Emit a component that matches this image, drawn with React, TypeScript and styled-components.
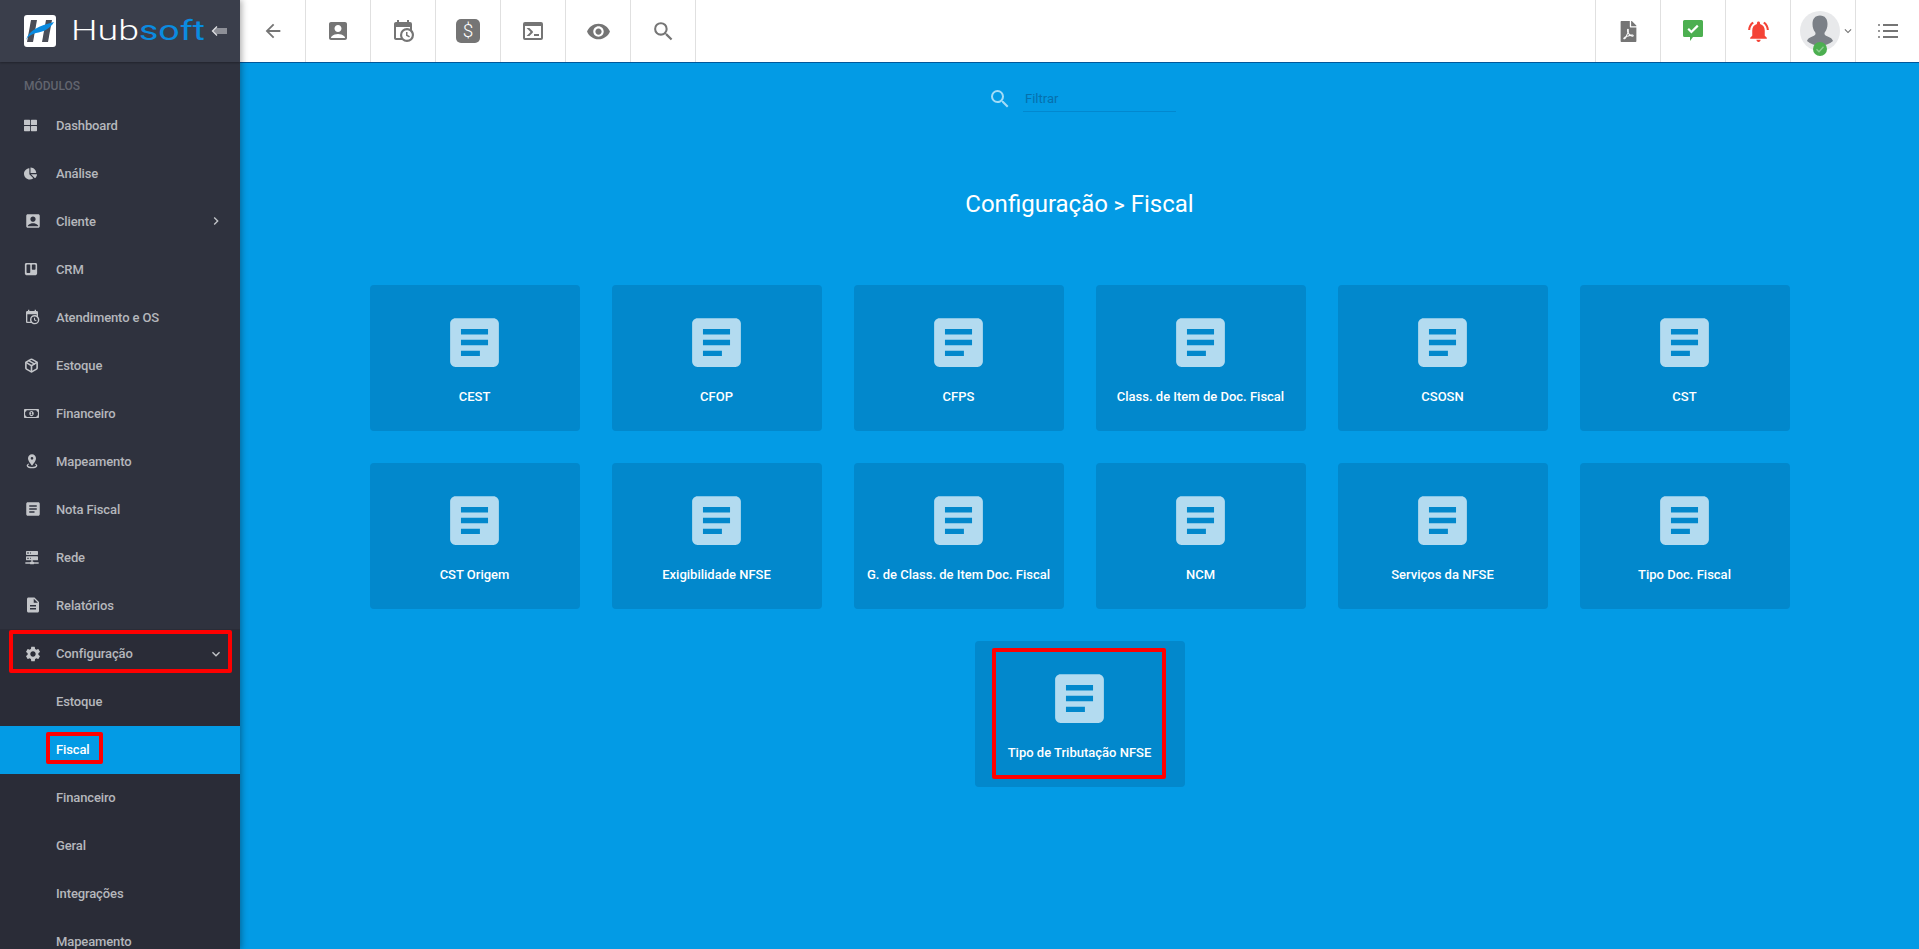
import React from 'react'
import styled, { createGlobalStyle } from 'styled-components'
import {
  MdAccountBox,
  MdArrowBack,
  MdArticle,
  MdChevronRight,
  MdDescription,
  MdExpandMore,
  MdNotificationsActive,
  MdSearch,
  MdSettings,
  MdVisibility,
} from 'react-icons/md'
import { FaChartPie, FaFilePdf, FaTrello, FaThLarge, FaRegMoneyBillAlt } from 'react-icons/fa'
import { LuPackage } from 'react-icons/lu'

const GlobalStyle = createGlobalStyle`
  html, body, #root {
    margin: 0;
    height: 100%;
    overflow: hidden;
  }
  body {
    font-family: Roboto, "Liberation Sans", sans-serif;
    background: #039be5;
  }
`

const CalendarClock = ({ size = 24 }: { size?: number }) => (
  <svg width={size} height={size} viewBox="0 0 24 24" fill="currentColor">
    <path d="M15,13H16.5V15.82L18.94,17.23L18.19,18.53L15,16.69V13M19,8H5V19H9.67C9.24,18.09 9,17.07 9,16A7,7 0 0,1 16,9C17.07,9 18.09,9.24 19,9.67V8M5,21C3.89,21 3,20.1 3,19V5C3,3.89 3.89,3 5,3H6V1H8V3H16V1H18V3H19A2,2 0 0,1 21,5V11.1C22.24,12.36 23,14.09 23,16A7,7 0 0,1 16,23C14.09,23 12.36,22.24 11.1,21H5M16,11.15A4.85,4.85 0 0,0 11.15,16C11.15,18.68 13.32,20.85 16,20.85A4.85,4.85 0 0,0 20.85,16C20.85,13.32 18.68,11.15 16,11.15Z" />
  </svg>
)

const MapMarker = ({ size = 24 }: { size?: number }) => (
  <svg width={size} height={size} viewBox="0 0 24 24" fill="currentColor">
    <path d="M12,2C15.31,2 18,4.66 18,7.95C18,12.41 12,19 12,19C12,19 6,12.41 6,7.95C6,4.66 8.69,2 12,2M12,6A2,2 0 0,0 10,8A2,2 0 0,0 12,10A2,2 0 0,0 14,8A2,2 0 0,0 12,6M20,19C20,21.21 16.42,23 12,23C7.58,23 4,21.21 4,19C4,17.71 5.22,16.56 7.11,15.83L7.75,16.74C6.67,17.19 6,17.81 6,18.5C6,19.88 8.69,21 12,21C15.31,21 18,19.88 18,18.5C18,17.81 17.33,17.19 16.25,16.74L16.89,15.83C18.78,16.56 20,17.71 20,19Z" />
  </svg>
)

const ServerNetwork = ({ size = 24 }: { size?: number }) => (
  <svg width={size} height={size} viewBox="0 0 24 24" fill="currentColor">
    <path d="M13,19H14A1,1 0 0,1 15,20H22V22H15A1,1 0 0,1 14,23H10A1,1 0 0,1 9,22H2V20H9A1,1 0 0,1 10,19H11V17H4A1,1 0 0,1 3,16V12A1,1 0 0,1 4,11H20A1,1 0 0,1 21,12V16A1,1 0 0,1 20,17H13V19M4,3H20A1,1 0 0,1 21,4V8A1,1 0 0,1 20,9H4A1,1 0 0,1 3,8V4A1,1 0 0,1 4,3M9,7H10V5H9V7M9,15H10V13H9V15M5,5V7H7V5H5M5,13V15H7V13H5Z" />
  </svg>
)

const ConsoleBox = ({ size = 24 }: { size?: number }) => (
  <svg width={size} height={size} viewBox="0 0 24 24" fill="currentColor">
    <path d="M20,19V7H4V19H20M20,3A2,2 0 0,1 22,5V19A2,2 0 0,1 20,21H4A2,2 0 0,1 2,19V5A2,2 0 0,1 4,3H20M13,17V15H18V17H13M9.58,13L5.57,9H8.4L11.7,12.3C12.09,12.69 12.09,13.33 11.7,13.72L8.42,17H5.59L9.58,13Z" />
  </svg>
)

const ChatCheck = () => (
  <svg width="20" height="22" viewBox="0 0 20 22">
    <path d="M1.5 0h17A1.5 1.5 0 0 1 20 1.5v14a1.5 1.5 0 0 1-1.5 1.500H10l-3 4v-4H1.500A1.500 1.500 0 0 1 0 15.500v-14A1.500 1.500 0 0 1 1.500 0z" fill="#4caf50" />
    <path d="M5.200 8.800l3.200 3.200 6.400-6.400" fill="none" stroke="#fff" strokeWidth="2.200" />
  </svg>
)

const BulletList = () => (
  <svg width="20" height="16" viewBox="0 0 20 16" fill="#757575">
    <rect x="0" y="1" width="2" height="2" rx="1" />
    <rect x="5" y="1" width="15" height="2" />
    <rect x="0" y="7" width="2" height="2" rx="1" />
    <rect x="5" y="7" width="15" height="2" />
    <rect x="0" y="13" width="2" height="2" rx="1" />
    <rect x="5" y="13" width="15" height="2" />
  </svg>
)

const LogoMark = () => (
  <svg width="32" height="32" viewBox="0 0 32 32">
    <rect width="32" height="32" rx="3" fill="#fff" />
    <path d="M7 5h6L9 27H3z" fill="#4a4d57" />
    <path d="M22 5h6l-4 22h-6z" fill="#4a4d57" />
    <path d="M2 25C5 15 15 11 30 7 26 14 19 17 12 18 8 19 4 21 2 25z" fill="#0a8be0" />
  </svg>
)

const FoldArrows = () => (
  <svg width="16" height="14" viewBox="0 0 16 14" fill="none" stroke="#dfe0e3" strokeWidth="1.300">
    <path d="M6 2.500L1.500 7 6 11.500" />
    <path d="M3.500 5H16M2 7h14M3.500 9H16" strokeWidth="1.100" />
  </svg>
)

const Silhouette = () => (
  <svg width="40" height="40" viewBox="0 0 40 40">
    <circle cx="20" cy="20" r="20" fill="#e8e9eb" />
    <path d="M20 4.500c5 0 7.500 3.500 7.500 8.500 0 3.500-1 6-2.500 8-1 1.500-.5 3 1 3.700 3 1.300 6 2 7 5.300a20 20 0 0 1-26 0c1-3.300 4-4 7-5.300 1.500-.7 2-2.200 1-3.700-1.500-2-2.500-4.500-2.500-8 0-5 2.500-8.500 7.500-8.500z" fill="#7b8087" />
  </svg>
)

const Shell = styled.div`
  display: flex;
  height: 100vh;
  overflow: hidden;
`

const Sidebar = styled.aside`
  width: 240px;
  flex: none;
  display: flex;
  flex-direction: column;
  background: #2f323e;
  box-shadow: 2px 0 6px rgba(0, 0, 0, 0.3);
  z-index: 3;
  overflow: hidden;
`

const Brand = styled.div`
  height: 62px;
  flex: none;
  display: flex;
  align-items: center;
  padding-left: 24px;
  background: #3a3e4b;
  box-shadow: 0 1px 2px rgba(0, 0, 0, 0.3);
  box-sizing: border-box;
`

const BrandName = styled.div`
  margin-left: 15px;
  width: 140px;
  font-size: 28px;
  font-weight: 300;
  line-height: 1;
  color: #fff;
  white-space: nowrap;
  transform: scaleX(1.34);
  transform-origin: left center;
  span {
    color: #0a8be0;
    font-weight: 400;
  }
`

const SectionLabel = styled.div`
  height: 39px;
  flex: none;
  padding: 17px 0 0 24px;
  box-sizing: border-box;
  font-size: 12px;
  font-weight: 500;
  line-height: 14px;
  color: #62656f;
`

const NavRow = styled.div<{ $active?: boolean; $open?: boolean; $sub?: boolean }>`
  position: relative;
  height: ${({ $open }) => ($open ? '49px' : '48px')};
  flex: none;
  display: flex;
  align-items: center;
  box-sizing: border-box;
  padding: 0 16px ${({ $sub }) => ($sub ? '2px' : '0')} ${({ $sub }) => ($sub ? '56px' : '24px')};
  font-size: 13px;
  font-weight: 500;
  letter-spacing: -0.12px;
  color: ${({ $active }) => ($active ? '#fff' : '#b5b7bc')};
  background: ${({ $active, $open, $sub }) =>
    $active ? '#039be5' : $open || $sub ? '#2a2c37' : 'transparent'};
`

const NavIcon = styled.span`
  width: 32px;
  flex: none;
  display: flex;
  align-items: center;
  color: #c3c5c9;
`

const NavText = styled.span`
  flex: 1;
  white-space: nowrap;
`

const Caret = styled.span`
  display: flex;
  color: #c3c5c9;
`

const Highlight = styled.div`
  position: absolute;
  box-sizing: border-box;
  border: 4px solid #ff0000;
  border-radius: 2px;
  pointer-events: none;
`

const ConfigHighlight = styled(Highlight)`
  left: 9px;
  right: 8px;
  top: 1px;
  bottom: 5px;
`

const FiscalHighlight = styled(Highlight)`
  left: 46px;
  width: 57px;
  top: 6px;
  bottom: 10px;
`

const CardHighlight = styled(Highlight)`
  left: 17px;
  right: 19px;
  top: 7px;
  bottom: 8px;
`

const Main = styled.div`
  flex: 1;
  min-width: 0;
  display: flex;
  flex-direction: column;
`

const Toolbar = styled.header`
  height: 62px;
  flex: none;
  display: flex;
  justify-content: space-between;
  background: #fff;
  box-shadow: 0 1px 0 #01579b;
  z-index: 2;
`

const LeftTools = styled.div`
  display: flex;
  padding-left: 1px;
`

const RightTools = styled.div`
  display: flex;
  margin-right: -1px;
`

const ToolButton = styled.div<{ $edge?: 'left' | 'right' }>`
  width: 65px;
  box-sizing: border-box;
  display: flex;
  align-items: center;
  justify-content: center;
  color: #757575;
  ${({ $edge }) => ($edge === 'left' ? 'border-left: 1px solid #e0e0e0;' : 'border-right: 1px solid #e0e0e0;')}
`

const AvatarButton = styled(ToolButton)`
  justify-content: flex-start;
  padding-left: 9px;
`

const DollarBox = styled.div`
  width: 24px;
  height: 24px;
  border-radius: 5px;
  background: #757575;
  color: #fff;
  font-size: 19px;
  font-weight: 300;
  line-height: 24px;
  text-align: center;
`

const AvatarWrap = styled.div`
  position: relative;
  width: 40px;
  height: 40px;
`

const AvatarBadge = styled.div`
  position: absolute;
  left: 13px;
  top: 31px;
  width: 14px;
  height: 14px;
  display: flex;
  align-items: center;
  justify-content: center;
  border-radius: 50%;
  background: #4caf50;
  color: #8fce92;
`

const AvatarCaret = styled.span`
  display: flex;
  margin-left: 1px;
  color: #757575;
`

const Content = styled.main`
  flex: 1;
  display: flex;
  flex-direction: column;
  align-items: center;
  padding-top: 19px;
  overflow: hidden;
`

const FilterRow = styled.div`
  display: flex;
  align-items: center;
  height: 36px;
  margin-left: 5px;
  color: #a3dcf7;
`

const FilterInput = styled.div`
  width: 153px;
  height: 26px;
  margin-left: 11px;
  box-sizing: border-box;
  border-bottom: 1px solid #0288cf;
  font-size: 13px;
  line-height: 26px;
  padding-left: 2px;
  color: #0670ad;
`

const Title = styled.h1`
  margin: 71px 0 65px;
  height: 32px;
  font-size: 24px;
  font-weight: 400;
  line-height: 32px;
  color: #fff;
`

const TitleSep = styled.span`
  font-size: 21px;
  font-weight: 500;
  line-height: 1;
`

const CardGrid = styled.div`
  width: 1420px;
  display: flex;
  flex-wrap: wrap;
  justify-content: center;
  gap: 32px;
`

const Card = styled.div`
  position: relative;
  width: 210px;
  height: 146px;
  display: flex;
  flex-direction: column;
  align-items: center;
  padding-top: 25px;
  box-sizing: border-box;
  border-radius: 4px;
  background: #0288cc;
`

const CardIcon = styled.div`
  display: flex;
  color: rgba(255, 255, 255, 0.7);
`

const CardLabel = styled.div`
  margin-top: 12px;
  font-size: 13px;
  font-weight: 500;
  line-height: 20px;
  color: #fff;
`

const modules: { label: string; icon: React.ReactNode; caret?: boolean }[] = [
  { label: 'Dashboard', icon: <FaThLarge size={13} /> },
  { label: 'Análise', icon: <FaChartPie size={13} /> },
  { label: 'Cliente', icon: <MdAccountBox size={18} />, caret: true },
  { label: 'CRM', icon: <FaTrello size={14} /> },
  { label: 'Atendimento e OS', icon: <CalendarClock size={16} /> },
  { label: 'Estoque', icon: <LuPackage size={15} strokeWidth={2.6} /> },
  { label: 'Financeiro', icon: <FaRegMoneyBillAlt size={15} /> },
  { label: 'Mapeamento', icon: <MapMarker size={16} /> },
  { label: 'Nota Fiscal', icon: <MdArticle size={18} /> },
  { label: 'Rede', icon: <ServerNetwork size={16} /> },
  { label: 'Relatórios', icon: <MdDescription size={18} /> },
]

const subModules = ['Estoque', 'Fiscal', 'Financeiro', 'Geral', 'Integrações', 'Mapeamento']

const cards = [
  'CEST',
  'CFOP',
  'CFPS',
  'Class. de Item de Doc. Fiscal',
  'CSOSN',
  'CST',
  'CST Origem',
  'Exigibilidade NFSE',
  'G. de Class. de Item Doc. Fiscal',
  'NCM',
  'Serviços da NFSE',
  'Tipo Doc. Fiscal',
  'Tipo de Tributação NFSE',
]

export default function App() {
  return (
    <Shell>
      <GlobalStyle />
      <Sidebar>
        <Brand>
          <LogoMark />
          <BrandName>
            Hub<span>soft</span>
          </BrandName>
          <FoldArrows />
        </Brand>
        <SectionLabel>MÓDULOS</SectionLabel>
        {modules.map((m) => (
          <NavRow key={m.label}>
            <NavIcon>{m.icon}</NavIcon>
            <NavText>{m.label}</NavText>
            {m.caret && (
              <Caret>
                <MdChevronRight size={16} />
              </Caret>
            )}
          </NavRow>
        ))}
        <NavRow $open>
          <NavIcon>
            <MdSettings size={18} />
          </NavIcon>
          <NavText>Configuração</NavText>
          <Caret>
            <MdExpandMore size={16} />
          </Caret>
          <ConfigHighlight />
        </NavRow>
        {subModules.map((label) => (
          <NavRow key={label} $sub $active={label === 'Fiscal'}>
            <NavText>{label}</NavText>
            {label === 'Fiscal' && <FiscalHighlight />}
          </NavRow>
        ))}
      </Sidebar>
      <Main>
        <Toolbar>
          <LeftTools>
            <ToolButton>
              <MdArrowBack size={22} />
            </ToolButton>
            <ToolButton>
              <MdAccountBox size={24} />
            </ToolButton>
            <ToolButton>
              <CalendarClock />
            </ToolButton>
            <ToolButton>
              <DollarBox>$</DollarBox>
            </ToolButton>
            <ToolButton>
              <ConsoleBox />
            </ToolButton>
            <ToolButton>
              <MdVisibility size={25} />
            </ToolButton>
            <ToolButton>
              <MdSearch size={25} />
            </ToolButton>
          </LeftTools>
          <RightTools>
            <ToolButton $edge="left">
              <FaFilePdf size={21} />
            </ToolButton>
            <ToolButton $edge="left">
              <ChatCheck />
            </ToolButton>
            <ToolButton $edge="left">
              <MdNotificationsActive size={25} color="#f44336" />
            </ToolButton>
            <AvatarButton $edge="left">
              <AvatarWrap>
                <Silhouette />
                <AvatarBadge>
                  <svg width="10" height="10" viewBox="0 0 10 10" fill="none" stroke="currentColor" strokeWidth="1.300">
                    <path d="M1.500 5.200l2.500 2.500 4.500-5" />
                  </svg>
                </AvatarBadge>
              </AvatarWrap>
              <AvatarCaret>
                <MdExpandMore size={14} />
              </AvatarCaret>
            </AvatarButton>
            <ToolButton $edge="left">
              <BulletList />
            </ToolButton>
          </RightTools>
        </Toolbar>
        <Content>
          <FilterRow>
            <MdSearch size={24} />
            <FilterInput>Filtrar</FilterInput>
          </FilterRow>
          <Title>
            Configuração <TitleSep>&gt;</TitleSep> Fiscal
          </Title>
          <CardGrid>
            {cards.map((label) => (
              <Card key={label}>
                <CardIcon>
                  <MdArticle size={65} />
                </CardIcon>
                <CardLabel>{label}</CardLabel>
                {label === 'Tipo de Tributação NFSE' && <CardHighlight />}
              </Card>
            ))}
          </CardGrid>
        </Content>
      </Main>
    </Shell>
  )
}
